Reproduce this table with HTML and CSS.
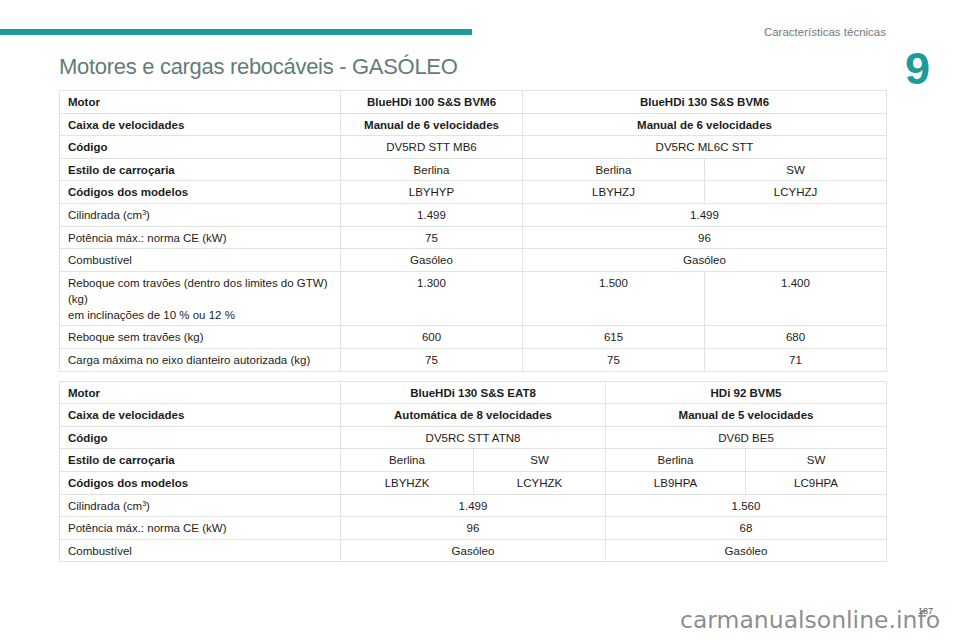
FILE: index.html
```html
<!DOCTYPE html>
<html lang="pt">
<head>
<meta charset="utf-8">
<title>Motores e cargas rebocáveis - GASÓLEO</title>
<link rel="stylesheet" href="styles.css">
</head>
<body>
<div class="page">
  <header class="topbar">
    <div class="rule"></div>
    <div class="section-name">Características técnicas</div>
  </header>
  <div class="main">
    <div class="content">
      <h1 class="title">Motores e cargas rebocáveis - GASÓLEO</h1>
      <table class="spec">
        <colgroup><col class="c-label"><col class="c3"><col class="c3"><col class="c3"></colgroup>
        <tr class="hd"><td>Motor</td><td>BlueHDi 100 S&amp;S BVM6</td><td colspan="2">BlueHDi 130 S&amp;S BVM6</td></tr>
        <tr class="hd"><td>Caixa de velocidades</td><td>Manual de 6 velocidades</td><td colspan="2">Manual de 6 velocidades</td></tr>
        <tr class="bl"><td>Código</td><td>DV5RD STT MB6</td><td colspan="2">DV5RC ML6C STT</td></tr>
        <tr class="bl"><td>Estilo de carroçaria</td><td>Berlina</td><td>Berlina</td><td>SW</td></tr>
        <tr class="bl"><td>Códigos dos modelos</td><td>LBYHYP</td><td>LBYHZJ</td><td>LCYHZJ</td></tr>
        <tr><td>Cilindrada (cm<sup>3</sup>)</td><td>1.499</td><td colspan="2">1.499</td></tr>
        <tr><td>Potência máx.: norma CE (kW)</td><td>75</td><td colspan="2">96</td></tr>
        <tr><td>Combustível</td><td>Gasóleo</td><td colspan="2">Gasóleo</td></tr>
        <tr><td>Reboque com travões (dentro dos limites do GTW)<br>(kg)<br>em inclinações de 10 % ou 12 %</td><td>1.300</td><td>1.500</td><td>1.400</td></tr>
        <tr><td>Reboque sem travões (kg)</td><td>600</td><td>615</td><td>680</td></tr>
        <tr><td>Carga máxima no eixo dianteiro autorizada (kg)</td><td>75</td><td>75</td><td>71</td></tr>
      </table>
      <table class="spec second">
        <colgroup><col class="c-label"><col class="c4a"><col class="c4b"><col class="c4c"><col class="c4d"></colgroup>
        <tr class="hd"><td>Motor</td><td colspan="2">BlueHDi 130 S&amp;S EAT8</td><td colspan="2">HDi 92 BVM5</td></tr>
        <tr class="hd"><td>Caixa de velocidades</td><td colspan="2">Automática de 8 velocidades</td><td colspan="2">Manual de 5 velocidades</td></tr>
        <tr class="bl"><td>Código</td><td colspan="2">DV5RC STT ATN8</td><td colspan="2">DV6D BE5</td></tr>
        <tr class="bl"><td>Estilo de carroçaria</td><td>Berlina</td><td>SW</td><td>Berlina</td><td>SW</td></tr>
        <tr class="bl"><td>Códigos dos modelos</td><td>LBYHZK</td><td>LCYHZK</td><td>LB9HPA</td><td>LC9HPA</td></tr>
        <tr><td>Cilindrada (cm<sup>3</sup>)</td><td colspan="2">1.499</td><td colspan="2">1.560</td></tr>
        <tr><td>Potência máx.: norma CE (kW)</td><td colspan="2">96</td><td colspan="2">68</td></tr>
        <tr><td>Combustível</td><td colspan="2">Gasóleo</td><td colspan="2">Gasóleo</td></tr>
      </table>
    </div>
    <div class="chapter">9</div>
  </div>
  <div class="page-num">187</div>
  <div class="watermark">carmanualsonline.info</div>
</div>
</body>
</html>
```
FILE: styles.css
```css
html, body {
  margin: 0;
  padding: 0;
  background: #ffffff;
}
.page {
  position: relative;
  width: 960px;
  height: 640px;
  overflow: hidden;
  font-family: "Liberation Sans", Arial, sans-serif;
  color: #1c1c1c;
}
.topbar {
  display: flex;
  align-items: center;
  padding-top: 25px;
}
.rule {
  width: 472px;
  height: 6px;
  background: #1e9a9b;
}
.section-name {
  margin-left: auto;
  margin-right: 74px;
  font-size: 11.5px;
  line-height: 14px;
  color: #6e7d7d;
}
.main {
  display: flex;
  align-items: flex-start;
  padding-left: 59px;
}
.content {
  width: 827px;
}
.title {
  margin: 14px 0 9px 0;
  font-size: 22px;
  line-height: 28px;
  font-weight: normal;
  letter-spacing: -0.3px;
  color: #637c7a;
}
.chapter {
  margin-left: 19px;
  margin-top: 7px;
  font-size: 45px;
  line-height: 46px;
  font-weight: bold;
  color: #1e9a9b;
}
.spec {
  width: 827px;
  border-collapse: collapse;
  table-layout: fixed;
}
.spec.second {
  margin-top: 9px;
}
.c-label { width: 281px; }
.c3 { width: 182px; }
.c4a { width: 133px; }
.c4b { width: 132px; }
.c4c { width: 140px; }
.c4d { width: 141px; }
.spec td {
  border: 1px solid #dfe4e3;
  padding: 3px 8px 2.6px 8px;
  font-size: 11.5px;
  line-height: 16px;
  vertical-align: top;
  text-align: center;
  white-space: nowrap;
}
.spec td:first-child {
  text-align: left;
}
.spec tr.hd td {
  font-weight: bold;
}
.spec tr.bl td:first-child {
  font-weight: bold;
}
.spec sup {
  font-size: 7px;
  line-height: 0;
  vertical-align: 4px;
}
.page-num {
  position: absolute;
  left: 918px;
  top: 606px;
  font-size: 9px;
  line-height: 10px;
  color: #555;
}
.watermark {
  position: absolute;
  left: 680px;
  top: 605px;
  font-family: "DejaVu Sans", sans-serif;
  font-size: 23.5px;
  line-height: 30px;
  color: rgba(120, 120, 120, 0.85);
}
```
